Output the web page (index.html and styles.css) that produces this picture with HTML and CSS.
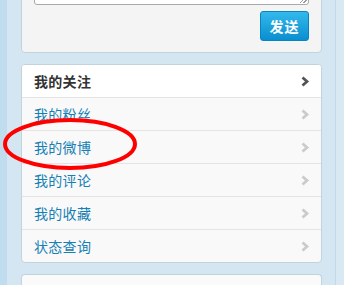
FILE: index.html
```html
<!DOCTYPE html>
<html lang="zh">
<head>
<meta charset="utf-8">
<link rel="stylesheet" href="styles.css">
</head>
<body>
<div class="page">
  <div class="strip"></div>
  <div class="main">
    <div class="panel compose">
      <div class="textarea"><span class="grip"></span></div>
      <div class="actions"><button class="send">发送</button></div>
    </div>
    <div class="panel menu">
      <div class="row head"><span>我的关注</span><svg class="chev" viewBox="0 0 9 11" width="9" height="11"><polyline points="1.5,1.5 6,5.5 1.5,9.5"/></svg></div>
      <div class="row"><a>我的粉丝</a><svg class="chev" viewBox="0 0 9 11" width="9" height="11"><polyline points="1.5,1.5 6,5.5 1.5,9.5"/></svg></div>
      <div class="row"><a>我的微博</a><svg class="chev" viewBox="0 0 9 11" width="9" height="11"><polyline points="1.5,1.5 6,5.5 1.5,9.5"/></svg></div>
      <div class="row"><a>我的评论</a><svg class="chev" viewBox="0 0 9 11" width="9" height="11"><polyline points="1.5,1.5 6,5.5 1.5,9.5"/></svg></div>
      <div class="row"><a>我的收藏</a><svg class="chev" viewBox="0 0 9 11" width="9" height="11"><polyline points="1.5,1.5 6,5.5 1.5,9.5"/></svg></div>
      <div class="row"><a>状态查询</a><svg class="chev" viewBox="0 0 9 11" width="9" height="11"><polyline points="1.5,1.5 6,5.5 1.5,9.5"/></svg></div>
    </div>
    <div class="panel next"></div>
  </div>
  <div class="edge"></div>
  <div class="rest"></div>
</div>
<svg class="circle" viewBox="0 0 142 58" width="142" height="58"><ellipse cx="70" cy="27" rx="65" ry="24"/></svg>
</body>
</html>
```
FILE: styles.css
```css
html, body {
  margin: 0;
  padding: 0;
  background: #d3e6f2;
  overflow: hidden;
}
body {
  width: 344px;
  height: 285px;
  position: relative;
  font-family: "Noto Sans CJK SC", "Noto Sans", sans-serif;
  font-size: 14px;
}
.page {
  display: flex;
  height: 285px;
  overflow: hidden;
}
.strip {
  width: 7px;
  background: #c0dcef;
  flex: none;
}
.main {
  flex: none;
  box-sizing: border-box;
  width: 328px;
  padding: 0 14px;
}
.edge {
  width: 1px;
  background: #c4d9e7;
  flex: none;
}
.rest {
  flex: 1;
  background: #d9e9f4;
}
.panel {
  border: 1px solid #c3d3de;
  border-radius: 4px;
  box-sizing: border-box;
  width: 301px;
}
.compose {
  margin-top: -60px;
  background: #f4f4f4;
  padding: 12px 12px 11px 12px;
}
.textarea {
  height: 52px;
  width: 275px;
  box-sizing: border-box;
  border: 1px solid #a9a9a9;
  border-radius: 3px;
  background: #fff;
  position: relative;
}
.grip {
  position: absolute;
  right: 1px;
  bottom: 1px;
  width: 7px;
  height: 7px;
  background: linear-gradient(135deg, transparent 45%, #9a9a9a 45%, #9a9a9a 55%, transparent 55%, transparent 70%, #9a9a9a 70%, #9a9a9a 80%, transparent 80%);
}
.actions {
  display: flex;
  justify-content: flex-end;
  margin-top: 6px;
}
.send {
  width: 49px;
  height: 30px;
  margin: 0;
  padding: 0;
  border: 1px solid #0a83c2;
  border-radius: 3px;
  background: linear-gradient(#33b9ec, #0a8ed0);
  color: #fff;
  font-family: "Noto Sans CJK SC", sans-serif;
  font-size: 14px;
  font-weight: bold;
  letter-spacing: 1px;
}
.menu {
  margin-top: 11px;
  background: #f9f9f9;
  overflow: hidden;
}
.row {
  height: 33px;
  box-sizing: border-box;
  border-bottom: 1px solid #e4e4e4;
  display: flex;
  align-items: center;
  justify-content: space-between;
  padding: 0 11px 0 12px;
}
.row:last-child {
  border-bottom: none;
  height: 32px;
}
.row a {
  color: #1680b5;
  letter-spacing: 0.3px;
}
.head {
  background: #fff;
}
.head span {
  color: #333;
  font-weight: bold;
  letter-spacing: 0.3px;
}
.chev polyline {
  fill: none;
  stroke: #cbcbcb;
  stroke-width: 2.8;
}
.head .chev polyline {
  stroke: #555;
}
.next {
  margin-top: 11px;
  height: 11px;
  border-bottom: none;
  border-radius: 4px 4px 0 0;
  background: #fafafa;
}
.circle {
  position: absolute;
  left: 0;
  top: 117px;
}
.circle ellipse {
  fill: none;
  stroke: #f00;
  stroke-width: 4;
}
```
